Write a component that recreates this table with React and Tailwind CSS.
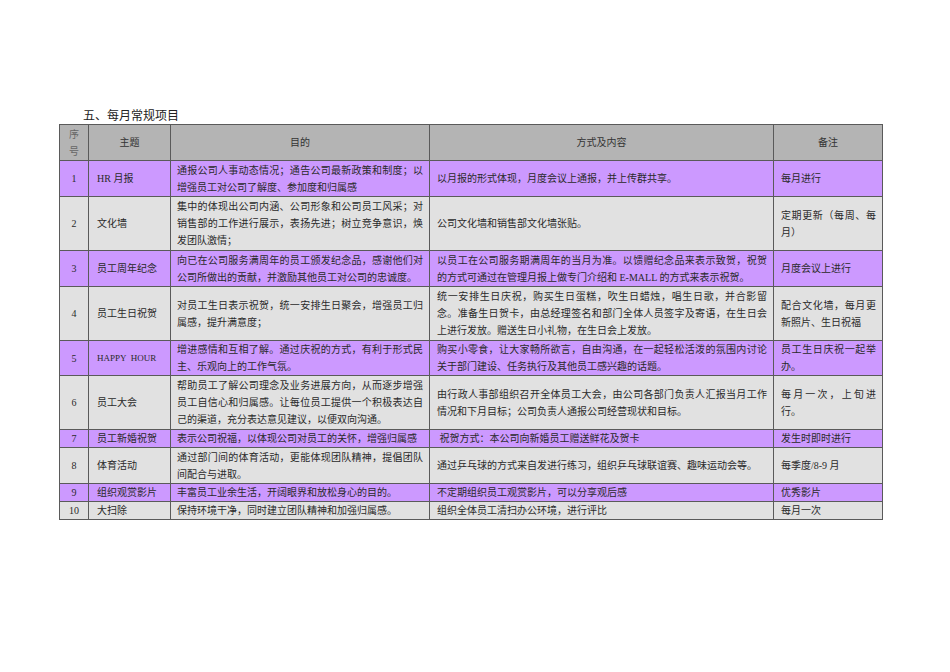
import React from "react";

const rows = [
  {
    no: "1", topic: "HR 月报", tone: "purple", h: 36,
    purpose: ["通报公司人事动态情况；通告公司最新政策和制度；以", "增强员工对公司了解度、参加度和归属感"],
    method: ["以月报的形式体现，月度会议上通报，并上传群共享。"],
    note: ["每月进行"],
  },
  {
    no: "2", topic: "文化墙", tone: "gray", h: 54,
    purpose: ["集中的体现出公司内涵、公司形象和公司员工风采；对", "销售部的工作进行展示，表扬先进；树立竞争意识，焕", "发团队激情；"],
    method: ["公司文化墙和销售部文化墙张贴。"],
    note: ["定期更新（每周、每", "月）"],
  },
  {
    no: "3", topic: "员工周年纪念", tone: "purple", h: 36,
    purpose: ["向已在公司服务满周年的员工颁发纪念品，感谢他们对", "公司所做出的贡献，并激励其他员工对公司的忠诚度。"],
    method: ["以员工在公司服务期满周年的当月为准。以馈赠纪念品来表示致贺，祝贺", "的方式可通过在管理月报上做专门介绍和 E-MALL 的方式来表示祝贺。"],
    note: ["月度会议上进行"],
  },
  {
    no: "4", topic: "员工生日祝贺", tone: "gray", h: 54,
    purpose: ["对员工生日表示祝贺，统一安排生日聚会，增强员工归", "属感，提升满意度；"],
    method: ["统一安排生日庆祝，购买生日蛋糕，吹生日蜡烛，唱生日歌，并合影留", "念。准备生日贺卡，由总经理签名和部门全体人员签字及寄语，在生日会", "上进行发放。赠送生日小礼物，在生日会上发放。"],
    note: ["配合文化墙，每月更", "新照片、生日祝福"],
  },
  {
    no: "5", topic: "HAPPY  HOUR", tone: "purple", h: 35,
    purpose: ["增进感情和互相了解。通过庆祝的方式，有利于形式民", "主、乐观向上的工作气氛。"],
    method: ["购买小零食，让大家畅所欲言，自由沟通，在一起轻松活泼的氛围内讨论", "关于部门建设、任务执行及其他员工感兴趣的话题。"],
    note: ["员工生日庆祝一起举", "办。"],
  },
  {
    no: "6", topic: "员工大会", tone: "gray", h: 54,
    purpose: ["帮助员工了解公司理念及业务进展方向，从而逐步增强", "员工自信心和归属感。让每位员工提供一个积极表达自", "己的渠道，充分表达意见建议，以便双向沟通。"],
    method: ["由行政人事部组织召开全体员工大会，由公司各部门负责人汇报当月工作", "情况和下月目标；公司负责人通报公司经营现状和目标。"],
    note: ["每月一次，上旬进", "行。"],
  },
  {
    no: "7", topic: "员工新婚祝贺", tone: "purple", h: 18,
    purpose: ["表示公司祝福，以体现公司对员工的关怀，增强归属感"],
    method: [" 祝贺方式：本公司向新婚员工赠送鲜花及贺卡"],
    note: ["发生时即时进行"],
  },
  {
    no: "8", topic: "体育活动", tone: "gray", h: 36,
    purpose: ["通过部门间的体育活动，更能体现团队精神，提倡团队", "间配合与进取。"],
    method: ["通过乒乓球的方式来自发进行练习，组织乒乓球联谊赛、趣味运动会等。"],
    note: ["每季度/8-9 月"],
  },
  {
    no: "9", topic: "组织观赏影片", tone: "purple", h: 18,
    purpose: ["丰富员工业余生活，开阔眼界和放松身心的目的。"],
    method: ["不定期组织员工观赏影片，可以分享观后感"],
    note: ["优秀影片"],
  },
  {
    no: "10", topic: "大扫除", tone: "gray", h: 17,
    purpose: ["保持环境干净，同时建立团队精神和加强归属感。"],
    method: ["组织全体员工清扫办公环境，进行评比"],
    note: ["每月一次"],
  },
];

// full lines get stretched like Word's justified paragraphs, the last one stays natural
function Lines({ lines }) {
  return lines.map((line, i) => (
    <div
      key={i}
      className={
        i < lines.length - 1
          ? "whitespace-pre text-justify [text-align-last:justify]"
          : "whitespace-pre"
      }
    >
      {line}
    </div>
  ));
}

export default function App() {
  const cell = "border border-[#5a5a5a] align-middle px-[6px] py-0";
  return (
    <div
      className="min-h-screen bg-white pt-[108px] pl-[59px] text-[#2a2a2a]"
      style={{ fontFamily: '"Liberation Serif", "Noto Sans CJK SC", serif' }}
    >
      <div className="pl-[24px] text-[12px] leading-[16px] text-[#222]">五、每月常规项目</div>
      <table className="table-fixed border-collapse w-[823px] text-[10px] leading-[17px]">
        <colgroup>
          <col className="w-[29px]" />
          <col className="w-[82px]" />
          <col className="w-[259px]" />
          <col className="w-[344px]" />
          <col className="w-[109px]" />
        </colgroup>
        <thead>
          <tr className="h-[36px] bg-[#b4b4b4] text-[#333]">
            <th className={`${cell} !px-0 font-normal text-center text-[#666]`}>
              <div>序</div>
              <div>号</div>
            </th>
            <th className={`${cell} font-normal text-center`}>主题</th>
            <th className={`${cell} font-normal text-center`}>目的</th>
            <th className={`${cell} font-normal text-center`}>方式及内容</th>
            <th className={`${cell} font-normal text-center`}>备注</th>
          </tr>
        </thead>
        <tbody>
          {rows.map((r) => (
            <tr
              key={r.no}
              className={r.tone === "purple" ? "bg-[#cc99ff]" : "bg-[#e1e1e1]"}
              style={{ height: r.h }}
            >
              <td className={`${cell} !px-0 text-center`}>{r.no}</td>
              <td className={`${cell} !pl-[8px] whitespace-pre ${r.no === "5" ? "text-[9px]" : ""}`}>
                {r.topic}
              </td>
              <td className={cell}>
                <Lines lines={r.purpose} />
              </td>
              <td className={`${cell} !pl-[7px]`}>
                <Lines lines={r.method} />
              </td>
              <td className={`${cell} !pl-[7px]`}>
                <Lines lines={r.note} />
              </td>
            </tr>
          ))}
        </tbody>
      </table>
    </div>
  );
}
